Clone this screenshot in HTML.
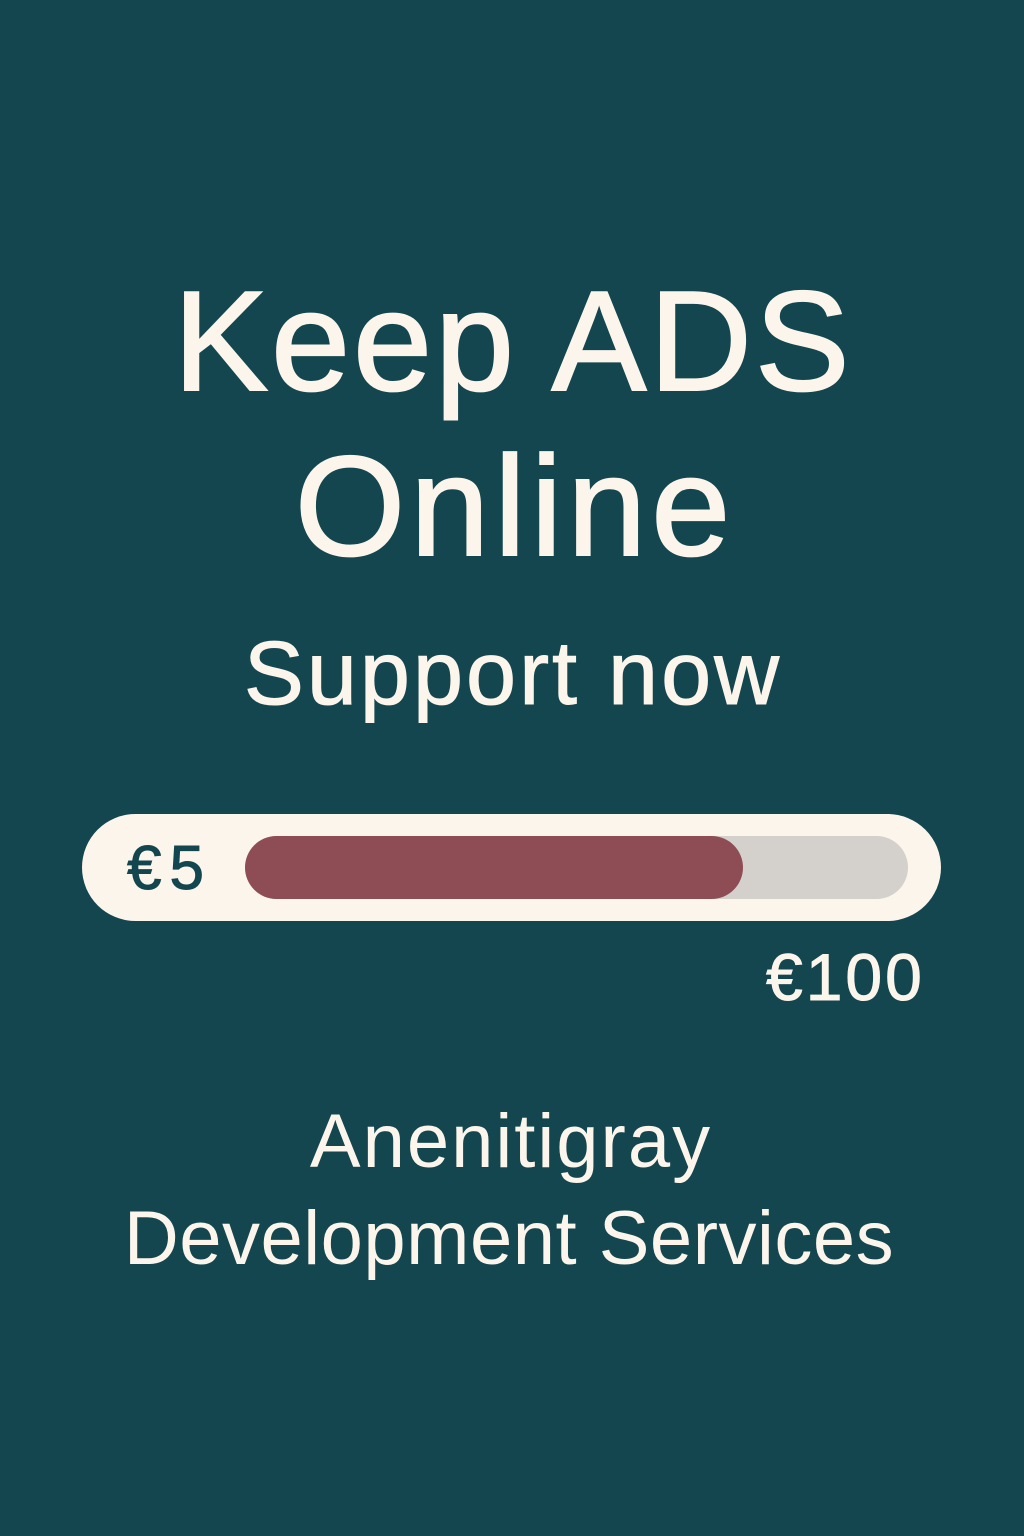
<!DOCTYPE html>
<html><head><meta charset="utf-8"><style>
html,body{margin:0;padding:0}
body{width:1024px;height:1536px;background:#13464f;position:relative;overflow:hidden;font-family:"Liberation Sans",sans-serif;color:#fcf5ec}
.t{position:absolute;left:0;width:1024px;text-align:center;line-height:1;white-space:nowrap}
.bar{position:absolute;left:82px;top:814px;width:859px;height:107px;border-radius:54px;background:#fcf5ec}
.track{position:absolute;left:245px;top:836px;width:663px;height:63px;border-radius:32px;background:#d4d0cc}
.fill{position:absolute;left:245px;top:836px;width:498px;height:63px;border-radius:32px;background:#8e4d55}
</style></head><body>
<div class="t" style="top:271px;font-size:142px;letter-spacing:3px;left:1px;-webkit-text-stroke:2px #fcf5ec">Keep ADS</div>
<div class="t" style="top:436px;font-size:142px;letter-spacing:5px;left:3px;-webkit-text-stroke:2px #fcf5ec">Online</div>
<div class="t" style="top:629px;font-size:90px;letter-spacing:3px;left:1px;-webkit-text-stroke:1px #fcf5ec">Support now</div>
<div class="bar"></div>
<div class="track"></div>
<div class="fill"></div>
<div style="position:absolute;left:127px;top:838px;font-size:62px;letter-spacing:8px;line-height:1;color:#13464f;-webkit-text-stroke:1px #13464f">€5</div>
<div style="position:absolute;left:766px;top:944px;font-size:66px;letter-spacing:3px;line-height:1;-webkit-text-stroke:1px #fcf5ec">€100</div>
<div class="t" style="top:1104px;font-size:76px;letter-spacing:2px;left:-1px">Anenitigray</div>
<div class="t" style="top:1201px;font-size:76px;letter-spacing:0.5px;left:-3px">Development Services</div>
</body></html>
